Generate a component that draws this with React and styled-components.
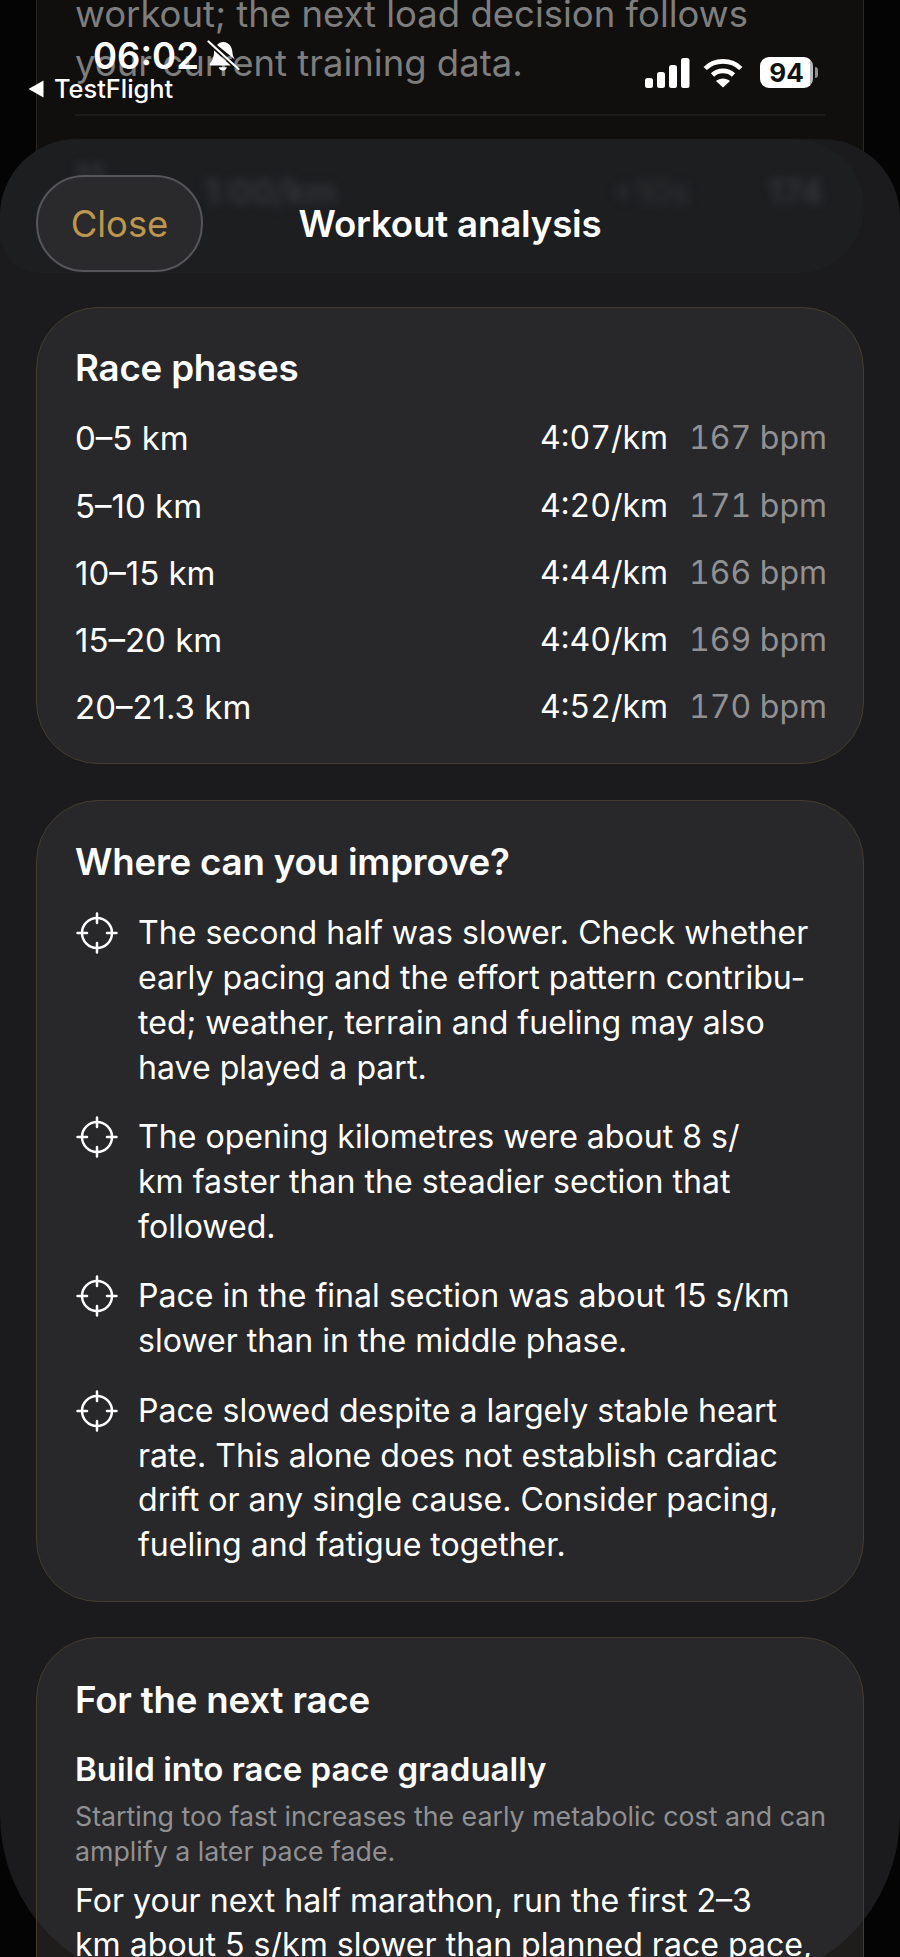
import React from 'react'
import styled, { createGlobalStyle } from 'styled-components'

const GlobalStyle = createGlobalStyle`
  html, body {
    margin: 0;
    padding: 0;
    background: #040404;
    font-family: "Inter", "Liberation Sans", sans-serif;
    -webkit-font-smoothing: antialiased;
  }
`

const phases = [
  { range: '0–5 km', pace: '4:07/km', bpm: '167 bpm' },
  { range: '5–10 km', pace: '4:20/km', bpm: '171 bpm' },
  { range: '10–15 km', pace: '4:44/km', bpm: '166 bpm' },
  { range: '15–20 km', pace: '4:40/km', bpm: '169 bpm' },
  { range: '20–21.3 km', pace: '4:52/km', bpm: '170 bpm' },
]

const improvements = [
  ['The second half was slower. Check whether', 'early pacing and the effort pattern contribu-', 'ted; weather, terrain and fueling may also', 'have played a part.'],
  ['The opening kilometres were about 8 s/', 'km faster than the steadier section that', 'followed.'],
  ['Pace in the final section was about 15 s/km', 'slower than in the middle phase.'],
  ['Pace slowed despite a largely stable heart', 'rate. This alone does not establish cardiac', 'drift or any single cause. Consider pacing,', 'fueling and fatigue together.'],
]

const Lines = ({ lines }) => lines.map((line) => <Line key={line}>{line}</Line>)

const TargetIcon = () => (
  <IconBox viewBox="0 0 42 42" fill="none" stroke="#fff" strokeWidth="2.5" strokeLinecap="round">
    <circle cx="21" cy="21" r="15" />
    <path d="M21 1.5V11M21 31v9.5M1.5 21H11M31 21h9.5" />
  </IconBox>
)

const StatusBar = () => (
  <Status>
    <Clock>
      <Time>06:02</Time>
      <svg width="36" height="32" viewBox="0 0 36 32" fill="#fff">
        <path d="M11 5c2.400-3 7-3.800 10.500-1.800 4 2.300 4.700 6.300 5.100 10.300.2 2.300 1 4.200 2.600 6.200L11 5z" />
        <path d="M8.200 10.600 24.800 25.400H4.800c-1.200 0-1.600-1.100-.8-2 3-3.200 3.900-6.900 4.200-12.800z" />
        <path d="M12.800 27.200h8c-.5 2.200-2.100 3.300-4 3.300s-3.500-1.100-4-3.300z" />
        <path d="M5.500 5.200 30 27.500" stroke="#101010" strokeWidth="2" strokeLinecap="round" />
        <path d="M2.500 1.500 32.500 29" stroke="#fff" strokeWidth="2.200" strokeLinecap="round" />
      </svg>
    </Clock>
    <BackLink>
      <svg width="16" height="18" viewBox="0 0 16 18" fill="#fff"><path d="M15.500 0.500v17L0.500 9z" /></svg>
      <span>TestFlight</span>
    </BackLink>
    <Indicators>
      <svg width="45" height="30" viewBox="0 0 45 30" fill="#fff">
        <rect x="0" y="20" width="8" height="10" rx="2.500" />
        <rect x="12" y="14" width="8" height="16" rx="2.500" />
        <rect x="24" y="7" width="8" height="23" rx="2.500" />
        <rect x="36" y="0" width="8.500" height="30" rx="2.500" />
      </svg>
      <svg width="40" height="30" viewBox="0 0 40 30" fill="none" stroke="#fff" strokeWidth="4.600">
        <path d="M2.200 10.500C11.500 1 28.500 1 37.800 10.500" />
        <path d="M9.500 17C15 11.500 25 11.500 30.500 17" />
        <path d="M20 29.500 13 23c3.700-3.500 10.300-3.500 14 0z" fill="#fff" stroke="none" />
      </svg>
      <Battery>
        <BatteryFill>94</BatteryFill>
        <BatteryNub />
      </Battery>
    </Indicators>
  </Status>
)

const App = () => (
  <>
    <GlobalStyle />
    <Screen>
      <BackCard>
        <BackText>
          workout; the next load decision follows
          <br />
          your current training data.
        </BackText>
        <BackDivider />
      </BackCard>

      <Sheet>
        <HeaderGlass>
          <GhostNumber>11</GhostNumber>
          <GhostPace>1:00/km</GhostPace>
          <GhostDelta>+10s</GhostDelta>
          <GhostHeart>174</GhostHeart>
        </HeaderGlass>
        <Header>
          <CloseButton>Close</CloseButton>
          <Title>Workout analysis</Title>
        </Header>

        <Cards>
          <PhaseCard>
            <CardTitle>Race phases</CardTitle>
            <PhaseList>
              {phases.map((phase) => (
                <PhaseRow key={phase.range}>
                  <span>{phase.range}</span>
                  <Pace>{phase.pace}</Pace>
                  <Bpm>{phase.bpm}</Bpm>
                </PhaseRow>
              ))}
            </PhaseList>
          </PhaseCard>

          <ImproveCard>
            <CardTitle>Where can you improve?</CardTitle>
            <TipList>
              {improvements.map((tip) => (
                <Tip key={tip[0]}>
                  <TargetIcon />
                  <div>
                    <Lines lines={tip} />
                  </div>
                </Tip>
              ))}
            </TipList>
          </ImproveCard>

          <NextCard>
            <CardTitle>For the next race</CardTitle>
            <SubTitle>Build into race pace gradually</SubTitle>
            <Note>
              Starting too fast increases the early metabolic cost and can
              <br />
              amplify a later pace fade.
            </Note>
            <Lines lines={['For your next half marathon, run the first 2–3', 'km about 5 s/km slower than planned race pace,']} />
          </NextCard>
        </Cards>
      </Sheet>

      <StatusBar />
    </Screen>
  </>
)

export default App

const Screen = styled.div`
  position: relative;
  width: 900px;
  height: 1957px;
  overflow: hidden;
  background: #040404;
  color: #fff;
`

const BackCard = styled.div`
  box-sizing: border-box;
  margin: -40px 36px 0;
  height: 2100px;
  padding: 30px 38px 0;
  background: #100f0d;
  border-left: 1.500px solid #2a2620;
  border-right: 1.500px solid #2a2620;
`

const BackText = styled.div`
  font-size: 36.500px;
  line-height: 49px;
  color: #7e7e7e;
  white-space: nowrap;
`

const BackDivider = styled.div`
  margin-top: 26px;
  height: 2px;
  background: #1c1b19;
`

const Sheet = styled.div`
  position: absolute;
  top: 139px;
  left: 0;
  box-sizing: border-box;
  width: 900px;
  height: 1846px;
  padding: 36px 36px 0;
  background: #1b1b1d;
  border-radius: 78px 78px 170px 170px;
`

const HeaderGlass = styled.div`
  position: absolute;
  top: 0;
  left: 0;
  width: 864px;
  height: 134px;
  overflow: hidden;
  background: #1d1e20;
  border-radius: 78px 70px 66px 40px;
`

const GhostText = styled.span`
  position: absolute;
  font-size: 34px;
  font-weight: 600;
  line-height: 40px;
  color: #36363a;
  filter: blur(5px);
`

const GhostNumber = styled(GhostText)`
  left: 75px;
  top: 18px;
`

const GhostPace = styled(GhostText)`
  left: 204px;
  top: 33px;
`

const GhostDelta = styled(GhostText)`
  left: 612px;
  top: 33px;
  color: #2d2d30;
`

const GhostHeart = styled(GhostText)`
  left: 768px;
  top: 33px;
`

const Header = styled.div`
  position: relative;
  display: flex;
  align-items: center;
  height: 97px;
`

const CloseButton = styled.div`
  box-sizing: border-box;
  width: 167px;
  height: 97px;
  display: flex;
  align-items: center;
  justify-content: center;
  font-size: 36.400px;
  color: #bd9650;
  background: #2a2a2c;
  border: 2px solid #55555a;
  border-radius: 48px;
`

const Title = styled.div`
  position: absolute;
  left: 0;
  right: 0;
  text-align: center;
  font-size: 36.700px;
  font-weight: 600;
  letter-spacing: -0.2px;
`

const Cards = styled.div`
  position: relative;
  display: flex;
  flex-direction: column;
  gap: 36px;
  margin-top: 35px;
`

const Card = styled.section`
  box-sizing: border-box;
  padding: 38px 38px 33px;
  background: rgba(255, 255, 255, 0.06);
  border: 1.500px solid #453c2d;
  border-radius: 62px;
  font-size: 32.100px;
  line-height: 44.700px;
`

const PhaseCard = styled(Card)`
  padding-bottom: 21.500px;
  font-size: 33px;
`

const ImproveCard = styled(Card)`
  padding-top: 39px;
`

const NextCard = styled(Card)`
  margin-top: -1px;
  padding-top: 40px;
  height: 500px;
`

const CardTitle = styled.h2`
  margin: 0;
  font-size: 36.700px;
  font-weight: 600;
  line-height: 44px;
  letter-spacing: -0.2px;
`

const PhaseList = styled.div`
  margin-top: 15px;
  display: flex;
  flex-direction: column;
`

const PhaseRow = styled.div`
  display: flex;
  align-items: center;
  height: 67.300px;
`

const Pace = styled.span`
  margin-left: auto;
  font-size: 32px;
  font-variant-numeric: tabular-nums;
`

const Bpm = styled.span`
  width: 136px;
  margin-left: 21px;
  font-size: 32px;
  color: #919194;
  text-align: right;
  white-space: nowrap;
  font-variant-numeric: tabular-nums;
`

const TipList = styled.div`
  margin-top: 27.500px;
  display: flex;
  flex-direction: column;
  gap: 25px;
`

const Tip = styled.div`
  display: flex;
  gap: 20px;
`

const IconBox = styled.svg`
  flex: none;
  width: 42px;
  height: 42px;
  margin: 1px 0 0 1px;
`

const Line = styled.div`
  white-space: nowrap;
`

const SubTitle = styled.h3`
  margin: 25px 0 0;
  font-size: 33px;
  font-weight: 600;
  line-height: 44px;
`

const Note = styled.p`
  margin: 8px 0 10px;
  font-size: 26.750px;
  line-height: 35px;
  color: #919194;
  white-space: nowrap;
`

const Status = styled.div`
  position: absolute;
  inset: 0 0 auto 0;
  height: 110px;
`

const Clock = styled.div`
  position: absolute;
  left: 93px;
  top: 37px;
  display: flex;
  align-items: center;
  gap: 7px;
`

const Time = styled.span`
  font-size: 36.500px;
  font-weight: 600;
  line-height: 38px;
`

const BackLink = styled.div`
  position: absolute;
  left: 28px;
  top: 74px;
  display: flex;
  align-items: center;
  gap: 10px;
  font-size: 25.400px;
  font-weight: 500;
  line-height: 30px;
`

const Indicators = styled.div`
  position: absolute;
  left: 645px;
  top: 57px;
  display: flex;
  align-items: center;
  gap: 13px;
`

const Battery = styled.div`
  display: flex;
  align-items: center;
  gap: 2px;
  margin-left: 4px;
`

const BatteryFill = styled.div`
  width: 53px;
  height: 31px;
  display: flex;
  align-items: center;
  justify-content: center;
  font-size: 26px;
  font-weight: 700;
  color: #111;
  background: linear-gradient(90deg, #fff 94%, #b9b9b9 94%);
  border-radius: 9px;
`

const BatteryNub = styled.div`
  width: 3px;
  height: 11px;
  background: #8f8f8f;
  border-radius: 0 3px 3px 0;
`
